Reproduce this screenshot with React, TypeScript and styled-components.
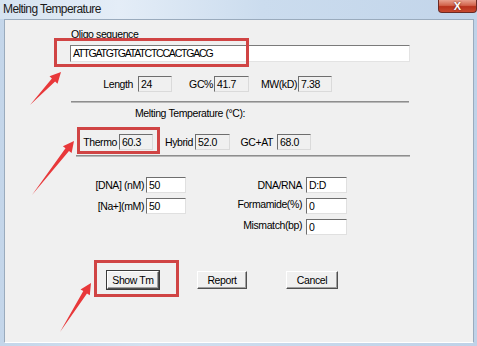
import React from "react";
import styled, { createGlobalStyle } from "styled-components";

const Global = createGlobalStyle`
  html, body { margin: 0; padding: 0; background: #c9d9ec; }
  body { font-family: "Liberation Sans", Arial, sans-serif; }
`;

const Window = styled.div`
  position: relative;
  width: 477px;
  height: 346px;
  display: flex;
  flex-direction: column;
  background: linear-gradient(90deg, #c4d6ea 0%, #d3e1f0 30%, #c8d9ec 60%, #bfd2e8 100%);
  overflow: hidden;
`;

const TitleBar = styled.div`
  height: 19px;
  display: flex;
  align-items: flex-start;
  justify-content: space-between;
  background: linear-gradient(90deg, #d6e3f1 0%, #e4edf7 25%, #cbdcee 55%, #c2d5ea 100%);
`;

const Title = styled.div`
  font-family: "Liberation Sans", Arial, sans-serif;
  font-size: 12px;
  letter-spacing: -0.6px;
  color: #1a1a1a;
  margin: 2px 0 0 3px;
  line-height: 14px;
`;

const CloseButton = styled.div`
  width: 37px;
  height: 12px;
  border: 1px solid #6b2a24;
  border-top: none;
  border-radius: 0 0 4px 4px;
  background: linear-gradient(180deg, #e8a08e 0%, #d2644c 45%, #b8321c 55%, #c84a30 100%);
  display: flex;
  align-items: center;
  justify-content: center;
  color: #fff;
  font-family: "Liberation Sans", Arial, sans-serif;
  font-weight: bold;
  font-size: 11px;
  line-height: 11px;
  text-shadow: 0 0 2px #5a1a10;
`;

const Client = styled.div`
  flex: 1;
  margin: 0 3px 3px 4px;
  border: 1px solid #9aabbd;
  border-bottom-color: #ffffff;
  background: #f0f0f0;
  padding: 8px 0 0 65px;
  display: flex;
  flex-direction: column;
  align-items: flex-start;
  font-size: 10.5px;
  letter-spacing: -0.4px;
  color: #000;
`;

const Label = styled.span<{ $ml?: number; $mt?: number }>`
  line-height: 13px;
  white-space: nowrap;
  margin-left: ${(p) => p.$ml ?? 0}px;
  margin-top: ${(p) => p.$mt ?? 0}px;
`;

const SeqInput = styled.div`
  margin-top: 4px;
  width: 340px;
  height: 17px;
  box-sizing: border-box;
  background: #fff;
  border-top: 1px solid #7a7a7a;
  border-left: 1px solid #7a7a7a;
  border-right: 1px solid #e3e3e3;
  border-bottom: 1px solid #e3e3e3;
  padding-left: 2px;
  letter-spacing: -1.2px;
  line-height: 15px;
`;

const Row = styled.div<{ $mt: number }>`
  margin-top: ${(p) => p.$mt}px;
  display: flex;
  align-items: center;
`;

const Group = styled.div<{ $ml: number }>`
  display: flex;
  align-items: center;
  margin-left: ${(p) => p.$ml}px;
`;

const SlotLabel = styled.span<{ $w: number; $gap: number }>`
  width: ${(p) => p.$w}px;
  margin-right: ${(p) => p.$gap}px;
  display: flex;
  justify-content: flex-end;
  white-space: nowrap;
  line-height: 13px;
`;

const Box = styled.div<{ $w: number }>`
  width: ${(p) => p.$w}px;
  height: 16px;
  box-sizing: border-box;
  background: #f0f0f0;
  border-top: 1px solid #6e6e6e;
  border-left: 1px solid #6e6e6e;
  border-right: 1px solid #dadada;
  border-bottom: 1px solid #dadada;
  padding-left: 2px;
  line-height: 14px;
`;

const Separator = styled.div<{ $mt: number; $ml: number; $w: number }>`
  margin-top: ${(p) => p.$mt}px;
  margin-left: ${(p) => p.$ml}px;
  width: ${(p) => p.$w}px;
  height: 1px;
  background: #8e8e8e;
  border-bottom: 1px solid #b8b8b8;
`;

const ParamsGrid = styled.div`
  margin-top: 20px;
  display: grid;
  grid-template-columns: 74px 40px 116px 41px;
  grid-auto-rows: 16px;
  column-gap: 2px;
  row-gap: 5px;
  align-items: center;
`;

const ParamLabel = styled.span<{ $pr?: number; $dy?: number }>`
  text-align: right;
  padding-right: ${(p) => p.$pr ?? 0}px;
  line-height: 13px;
  white-space: nowrap;
  position: relative;
  top: ${(p) => p.$dy ?? 0}px;
`;

const ParamBox = styled.div`
  height: 16px;
  box-sizing: border-box;
  background: #fff;
  border-top: 1px solid #6e6e6e;
  border-left: 1px solid #6e6e6e;
  border-right: 1px solid #e0e0e0;
  border-bottom: 1px solid #e0e0e0;
  padding-left: 2px;
  line-height: 14px;
`;

const ButtonRow = styled.div`
  margin-top: 36px;
  padding-left: 37px;
  display: flex;
  align-items: center;
`;

const Button = styled.div<{ $w: number; $ml: number; $default?: boolean }>`
  width: ${(p) => p.$w}px;
  height: 18px;
  margin-left: ${(p) => p.$ml}px;
  box-sizing: border-box;
  background: #f0f0f0;
  display: flex;
  align-items: center;
  justify-content: center;
  border-top: 1px solid #ffffff;
  border-left: 1px solid #ffffff;
  border-right: 1px solid #505050;
  border-bottom: 1px solid #505050;
  box-shadow: ${(p) =>
    p.$default
      ? "0 0 0 1px #3a3a3a, inset -1px -1px 0 #a0a0a0"
      : "inset -1px -1px 0 #a0a0a0"};
`;

const Highlight = styled.div<{ $x: number; $y: number; $w: number; $h: number }>`
  position: absolute;
  left: ${(p) => p.$x}px;
  top: ${(p) => p.$y}px;
  width: ${(p) => p.$w}px;
  height: ${(p) => p.$h}px;
  box-sizing: border-box;
  border: 3px solid #d04444;
  pointer-events: none;
`;

const ArrowLayer = styled.svg`
  position: absolute;
  left: 0;
  top: 0;
  pointer-events: none;
`;

function arrowPoints(tx: number, ty: number, hx: number, hy: number) {
  const dx = hx - tx;
  const dy = hy - ty;
  const len = Math.hypot(dx, dy);
  const ux = dx / len;
  const uy = dy / len;
  const nx = -uy;
  const ny = ux;
  const headLen = 11;
  const headW = 5.5;
  const shaftW = 2.2;
  const bx = hx - ux * headLen;
  const by = hy - uy * headLen;
  const pts = [
    [tx, ty],
    [bx + nx * shaftW, by + ny * shaftW],
    [bx + nx * headW, by + ny * headW],
    [hx, hy],
    [bx - nx * headW, by - ny * headW],
    [bx - nx * shaftW, by - ny * shaftW],
  ];
  return pts.map((p) => `${p[0].toFixed(1)},${p[1].toFixed(1)}`).join(" ");
}

const arrows = [
  { t: [30, 105], h: [61, 72] },
  { t: [32, 195], h: [74, 141] },
  { t: [60, 332], h: [91, 283] },
];

type Field = { label: string; value: string; ml: number; lw: number; gap: number; bw: number };

const statFields: Field[] = [
  { label: "Length", value: "24", ml: 30, lw: 33, gap: 5, bw: 34 },
  { label: "GC%", value: "41.7", ml: 13, lw: 28, gap: 1, bw: 35 },
  { label: "MW(kD)", value: "7.38", ml: 6, lw: 42, gap: 1, bw: 34 },
];

const tmFields: Field[] = [
  { label: "Thermo", value: "60.3", ml: 10, lw: 37, gap: 2, bw: 34 },
  { label: "Hybrid", value: "52.0", ml: 7, lw: 33, gap: 2, bw: 35 },
  { label: "GC+AT", value: "68.0", ml: 7, lw: 36, gap: 4, bw: 34 },
];

function FieldRow({ fields, mt }: { fields: Field[]; mt: number }) {
  return (
    <Row $mt={mt}>
      {fields.map((f) => (
        <Group key={f.label} $ml={f.ml}>
          <SlotLabel $w={f.lw} $gap={f.gap}>
            {f.label}
          </SlotLabel>
          <Box $w={f.bw}>{f.value}</Box>
        </Group>
      ))}
    </Row>
  );
}

export default function App() {
  return (
    <>
      <Global />
      <Window>
        <TitleBar>
          <Title>Melting Temperature</Title>
          <CloseButton>X</CloseButton>
        </TitleBar>
        <Client>
          <Label $ml={1}>Oligo sequence</Label>
          <SeqInput>ATTGATGTGATATCTCCACTGACG</SeqInput>

          <FieldRow fields={statFields} mt={14} />

          <Separator $mt={9} $ml={1} $w={338} />
          <Label $ml={65} $mt={4}>
            Melting Temperature (°C):
          </Label>

          <FieldRow fields={tmFields} mt={14} />

          <Separator $mt={5} $ml={6} $w={334} />

          <ParamsGrid>
            <ParamLabel>[DNA] (nM)</ParamLabel>
            <ParamBox>50</ParamBox>
            <ParamLabel $pr={2}>DNA/RNA</ParamLabel>
            <ParamBox>D:D</ParamBox>

            <ParamLabel>[Na+](mM)</ParamLabel>
            <ParamBox>50</ParamBox>
            <ParamLabel $pr={2} $dy={-2}>Formamide(%)</ParamLabel>
            <ParamBox>0</ParamBox>

            <span />
            <span />
            <ParamLabel $pr={2} $dy={-2}>Mismatch(bp)</ParamLabel>
            <ParamBox>0</ParamBox>
          </ParamsGrid>

          <ButtonRow>
            <Button $w={52} $ml={0} $default>
              Show Tm
            </Button>
            <Button $w={50} $ml={38}>
              Report
            </Button>
            <Button $w={52} $ml={39}>
              Cancel
            </Button>
          </ButtonRow>
        </Client>

        <Highlight $x={54} $y={38} $w={195} $h={29} />
        <Highlight $x={77} $y={127} $w={83} $h={27} />
        <Highlight $x={94} $y={260} $w={85} $h={37} />

        <ArrowLayer width={477} height={346} viewBox="0 0 477 346">
          {arrows.map((a, i) => (
            <polygon
              key={i}
              points={arrowPoints(a.t[0], a.t[1], a.h[0], a.h[1])}
              fill="#e8383a"
            />
          ))}
        </ArrowLayer>
      </Window>
    </>
  );
}
